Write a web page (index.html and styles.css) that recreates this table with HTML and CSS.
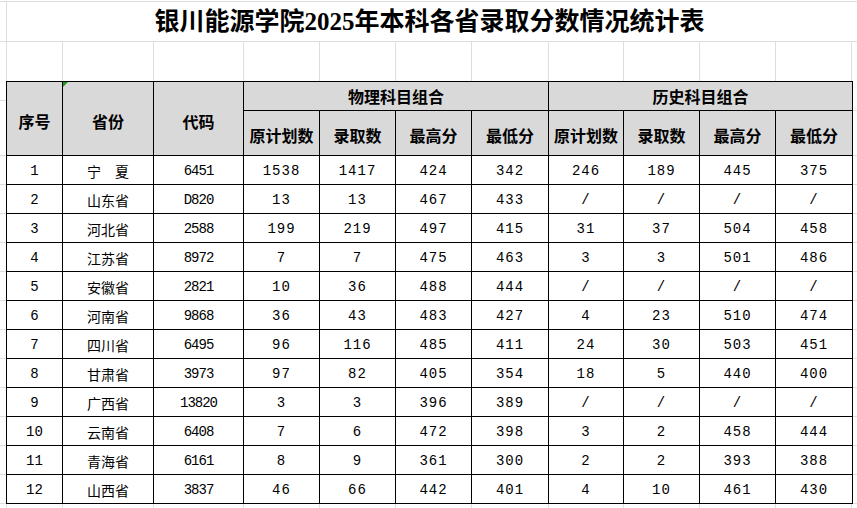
FILE: index.html
```html
<!DOCTYPE html>
<html lang="zh-CN">
<head>
<meta charset="utf-8">
<title>银川能源学院2025年本科各省录取分数情况统计表</title>
<link rel="stylesheet" href="styles.css">
</head>
<body>
<div class="sheet">
  <div class="title-row">
    <div class="t-gutter"></div>
    <div class="title">银川能源学院2025年本科各省录取分数情况统计表</div>
  </div>

  <div class="grid-row blank">
    <div class="g-pad"></div>
    <div class="gc w1"></div><div class="gc w2"></div><div class="gc w3"></div>
    <div class="gc w4"></div><div class="gc w5"></div><div class="gc w6"></div>
    <div class="gc w7"></div><div class="gc w8"></div><div class="gc w9"></div>
    <div class="gc w10"></div><div class="gc w11"></div><div class="gc rest"></div>
  </div>

  <div class="table-row">
    <div class="gutter left"><div class="g-head"></div><div class="g-body"></div></div>
    <table class="data">
      <colgroup>
        <col class="c1"><col class="c2"><col class="c3"><col class="c4"><col class="c5"><col class="c6">
        <col class="c7"><col class="c8"><col class="c9"><col class="c10"><col class="c11">
      </colgroup>
      <thead>
        <tr class="h1">
          <th rowspan="2">序号</th>
          <th rowspan="2" class="flagged">省份<span class="tri"></span></th>
          <th rowspan="2">代码</th>
          <th colspan="4">物理科目组合</th>
          <th colspan="4">历史科目组合</th>
        </tr>
        <tr class="h2">
          <th>原计划数</th><th>录取数</th><th>最高分</th><th>最低分</th>
          <th>原计划数</th><th>录取数</th><th>最高分</th><th>最低分</th>
        </tr>
      </thead>
      <tbody>
        <tr><td class="seq">1</td><td class="prov">宁　夏</td><td class="code">6451</td><td>1538</td><td>1417</td><td>424</td><td>342</td><td>246</td><td>189</td><td>445</td><td>375</td></tr>
        <tr><td class="seq">2</td><td class="prov">山东省</td><td class="code">D820</td><td>13</td><td>13</td><td>467</td><td>433</td><td>/</td><td>/</td><td>/</td><td>/</td></tr>
        <tr><td class="seq">3</td><td class="prov">河北省</td><td class="code">2588</td><td>199</td><td>219</td><td>497</td><td>415</td><td>31</td><td>37</td><td>504</td><td>458</td></tr>
        <tr><td class="seq">4</td><td class="prov">江苏省</td><td class="code">8972</td><td>7</td><td>7</td><td>475</td><td>463</td><td>3</td><td>3</td><td>501</td><td>486</td></tr>
        <tr><td class="seq">5</td><td class="prov">安徽省</td><td class="code">2821</td><td>10</td><td>36</td><td>488</td><td>444</td><td>/</td><td>/</td><td>/</td><td>/</td></tr>
        <tr><td class="seq">6</td><td class="prov">河南省</td><td class="code">9868</td><td>36</td><td>43</td><td>483</td><td>427</td><td>4</td><td>23</td><td>510</td><td>474</td></tr>
        <tr><td class="seq">7</td><td class="prov">四川省</td><td class="code">6495</td><td>96</td><td>116</td><td>485</td><td>411</td><td>24</td><td>30</td><td>503</td><td>451</td></tr>
        <tr><td class="seq">8</td><td class="prov">甘肃省</td><td class="code">3973</td><td>97</td><td>82</td><td>405</td><td>354</td><td>18</td><td>5</td><td>440</td><td>400</td></tr>
        <tr><td class="seq">9</td><td class="prov">广西省</td><td class="code">13820</td><td>3</td><td>3</td><td>396</td><td>389</td><td>/</td><td>/</td><td>/</td><td>/</td></tr>
        <tr><td class="seq">10</td><td class="prov">云南省</td><td class="code">6408</td><td>7</td><td>6</td><td>472</td><td>398</td><td>3</td><td>2</td><td>458</td><td>444</td></tr>
        <tr><td class="seq">11</td><td class="prov">青海省</td><td class="code">6161</td><td>8</td><td>9</td><td>361</td><td>300</td><td>2</td><td>2</td><td>393</td><td>388</td></tr>
        <tr><td class="seq">12</td><td class="prov">山西省</td><td class="code">3837</td><td>46</td><td>66</td><td>442</td><td>401</td><td>4</td><td>10</td><td>461</td><td>430</td></tr>
      </tbody>
    </table>
    <div class="gutter right"><div class="g-head"></div><div class="g-body"></div></div>
  </div>

  <div class="grid-row tail">
    <div class="g-pad"></div>
    <div class="gc w1"></div><div class="gc w2"></div><div class="gc w3"></div>
    <div class="gc w4"></div><div class="gc w5"></div><div class="gc w6"></div>
    <div class="gc w7"></div><div class="gc w8"></div><div class="gc w9"></div>
    <div class="gc w10"></div><div class="gc w11"></div><div class="gc rest"></div>
  </div>
</div>
</body>
</html>
```

FILE: styles.css
```css
html, body {
  margin: 0;
  padding: 0;
  background: #ffffff;
}

body {
  font-family: "Noto Sans CJK SC", sans-serif;
  color: #000;
  overflow: hidden;
}

.sheet {
  width: 857px;
  padding-top: 1px;
}

/* title row */
.title-row {
  display: flex;
  box-sizing: border-box;
  height: 41px;
  border-top: 1px solid #dedede;
  border-bottom: 1px solid #dedede;
}

.t-gutter {
  box-sizing: border-box;
  width: 7px;
  border-right: 1px solid #dedede;
}

.title {
  width: 845px;
  text-align: center;
  font-family: "Liberation Serif", "Noto Sans CJK SC", serif;
  font-weight: 700;
  font-size: 25px;
  line-height: 39px;
  letter-spacing: 0;
}

/* plain grid rows */
.grid-row {
  display: flex;
}

.grid-row.blank { height: 39px; }
.grid-row.tail { height: 6px; }

.g-pad { width: 6px; flex: none; }

.gc {
  box-sizing: border-box;
  flex: none;
  border-left: 1px solid #dedede;
}

.w1 { width: 56px; }
.w2 { width: 91px; }
.w3 { width: 90px; }
.w4 { width: 76px; }
.w5 { width: 76px; }
.w6 { width: 76px; }
.w7 { width: 77px; }
.w8 { width: 75px; }
.w9 { width: 76px; }
.w10 { width: 76px; }
.w11 { width: 76px; }
.gc.rest { flex: 1; }

/* table row with gutters */
.table-row {
  display: flex;
}

.gutter {
  display: flex;
  flex-direction: column;
}

.gutter.left { width: 6px; flex: none; }
.gutter.right { flex: 1; }

.g-head {
  height: 74px;
  flex: none;
  background-repeat: no-repeat;
  background-size: 100% 1px;
}

.gutter.left .g-head {
  background-image: linear-gradient(#dedede, #dedede);
  background-position: 0 19px;
}

.gutter.right .g-head {
  background-image: linear-gradient(#dedede, #dedede);
  background-position: 0 29px;
}

.g-body {
  flex: 1;
  background-image: repeating-linear-gradient(to bottom, #dedede 0 1px, transparent 1px 29px);
}

/* data table */
table.data {
  border-collapse: collapse;
  table-layout: fixed;
  width: 846px;
  flex: none;
}

col.c1 { width: 56px; }
col.c2 { width: 91px; }
col.c3 { width: 90px; }
col.c4 { width: 76px; }
col.c5 { width: 76px; }
col.c6 { width: 76px; }
col.c7 { width: 77px; }
col.c8 { width: 75px; }
col.c9 { width: 76px; }
col.c10 { width: 76px; }
col.c11 { width: 77px; }

table.data th,
table.data td {
  border: 1px solid #000;
  padding: 0;
  text-align: center;
  vertical-align: middle;
  overflow: hidden;
  white-space: nowrap;
}

table.data th {
  background: #d9d9d9;
  font-family: "Noto Sans CJK SC", sans-serif;
  font-weight: 700;
  font-size: 16px;
  line-height: 20px;
}

tr.h1 { height: 29px; }
tr.h2 { height: 45px; }

tr.h1 th[rowspan] { padding-top: 4px; }
tr.h2 th { padding-top: 3px; }

th.flagged { position: relative; }

.tri {
  position: absolute;
  left: 0;
  top: 0;
  width: 0;
  height: 0;
  border-top: 5px solid #1f9a1f;
  border-right: 5px solid transparent;
}

tbody tr { height: 29px; }

table.data td {
  font-family: "Liberation Mono", "Noto Sans CJK SC", monospace;
  font-size: 14px;
  font-weight: 400;
  letter-spacing: 1px;
  line-height: 18px;
  padding-top: 2px;
}

table.data td.seq {
  font-size: 14px;
  letter-spacing: 0;
}

table.data td.code {
  font-size: 14px;
  letter-spacing: -1px;
}

table.data td.prov {
  font-family: "Noto Sans CJK SC", sans-serif;
  font-size: 14px;
  letter-spacing: 0;
}
```
